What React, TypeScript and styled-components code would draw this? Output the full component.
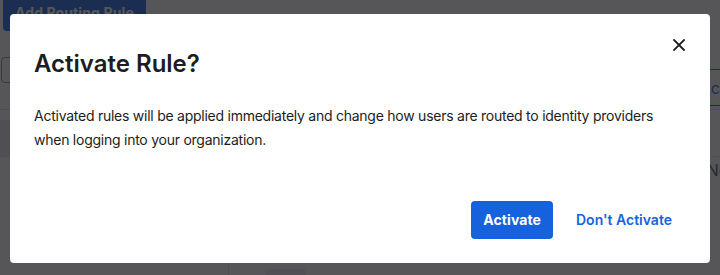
import styled, { createGlobalStyle } from 'styled-components';

const colors = {
  text: '#1d1d21',
  blue: '#1662dd',
  border: '#8c8c96',
  divider: '#e1e1e5',
  overlay: 'rgba(29, 29, 33, 0.75)',
};

const GlobalStyle = createGlobalStyle`
  html, body {
    margin: 0;
    padding: 0;
    background: #ffffff;
    font-family: Inter, "Noto Sans", "Liberation Sans", sans-serif;
    color: ${colors.text};
  }
`;

function App() {
  return (
    <>
      <GlobalStyle />
      <StyledPage>
        <StyledToolbar>
          <StyledPrimaryButton as="div">Add Routing Rule</StyledPrimaryButton>
        </StyledToolbar>
        <StyledFilterRow>
          <StyledSearch />
          <StyledTabs>
            <StyledTab>Inactive</StyledTab>
            <StyledTab isSelected>Active</StyledTab>
          </StyledTabs>
        </StyledFilterRow>
        <StyledTable>
          <StyledTableHead />
          <StyledTableRow>
            <StyledCell />
          </StyledTableRow>
          <StyledEmptyRow>No rules</StyledEmptyRow>
        </StyledTable>
        <StyledBottom>
          <StyledSideColumn />
          <StyledChip />
        </StyledBottom>
      </StyledPage>

      <StyledOverlay>
        <StyledDialog role="dialog" aria-labelledby="dialog-title">
          <StyledHeader>
            <StyledTitle id="dialog-title">Activate Rule?</StyledTitle>
            <StyledCloseButton aria-label="Close">
              <svg width="12" height="12" viewBox="0 0 12 12" fill="none">
                <path d="M1 1L11 11M11 1L1 11" stroke={colors.text} strokeWidth="1.8" strokeLinecap="square" />
              </svg>
            </StyledCloseButton>
          </StyledHeader>
          <StyledBody>
            Activated rules will be applied immediately and change how users are routed to identity providers
            when logging into your organization.
          </StyledBody>
          <StyledFooter>
            <StyledPrimaryButton>Activate</StyledPrimaryButton>
            <StyledTextButton>Don't Activate</StyledTextButton>
          </StyledFooter>
        </StyledDialog>
      </StyledOverlay>
    </>
  );
}

const StyledPage = styled.div`
  display: flex;
  flex-direction: column;
  height: 275px;
  overflow: hidden;
`;

const StyledToolbar = styled.div`
  display: flex;
  padding-left: 3px;
  margin-top: -7px;
`;

const StyledPrimaryButton = styled.button`
  display: flex;
  align-items: center;
  justify-content: center;
  height: 38px;
  padding: 0 12px;
  border: none;
  border-radius: 4px;
  background: ${colors.blue};
  color: #ffffff;
  font-family: inherit;
  font-size: 14px;
  font-weight: 700;
  letter-spacing: 0.1px;
  cursor: pointer;
`;

const StyledFilterRow = styled.div`
  display: flex;
  justify-content: space-between;
  align-items: flex-start;
  margin-top: 26px;
`;

const StyledSearch = styled.div`
  width: 220px;
  height: 24px;
  margin-left: 1px;
  border: 1px solid ${colors.border};
  border-radius: 4px;
`;

const StyledTabs = styled.div`
  display: flex;
  margin-top: 12px;
`;

const StyledTab = styled.div<{ isSelected?: boolean }>`
  display: flex;
  align-items: center;
  height: 35px;
  padding: ${({ isSelected }) => (isSelected ? '0 0 0 16px' : '0 16px')};
  border-top: 1px solid ${({ isSelected }) => (isSelected ? colors.blue : 'transparent')};
  border-bottom: 1px solid ${({ isSelected }) => (isSelected ? colors.blue : 'transparent')};
  color: ${({ isSelected }) => (isSelected ? colors.blue : colors.text)};
  font-size: 16px;
  margin-right: ${({ isSelected }) => (isSelected ? '-27px' : '0')};
`;

const StyledTable = styled.div`
  display: flex;
  flex-direction: column;
  margin-top: 3px;
  border-top: 1px solid ${colors.divider};
`;

const StyledTableHead = styled.div`
  height: 10px;
`;

const StyledTableRow = styled.div`
  display: flex;
  align-items: center;
  height: 36px;
  border-bottom: 1px solid ${colors.divider};
`;

const StyledCell = styled.div`
  width: 30px;
  height: 36px;
  border-radius: 0 6px 6px 0;
  background: #e8e8ea;
`;

const StyledEmptyRow = styled.div`
  display: flex;
  justify-content: flex-end;
  margin: 0 -50px 0 0;
  padding-top: 3px;
  color: #3f5173;
  font-size: 16px;
  line-height: 20px;
`;

const StyledBottom = styled.div`
  display: flex;
  flex: 1;
  margin-top: 79px;
`;

const StyledSideColumn = styled.div`
  width: 228px;
  border-right: 1px solid ${colors.divider};
`;

const StyledChip = styled.div`
  width: 40px;
  height: 12px;
  margin: 10px 0 0 37px;
  border-radius: 4px;
  background: #ececee;
`;

const StyledOverlay = styled.div`
  position: fixed;
  inset: 0;
  display: flex;
  align-items: center;
  justify-content: center;
  background: ${colors.overlay};
`;

const StyledDialog = styled.div`
  display: flex;
  flex-direction: column;
  box-sizing: border-box;
  width: 700px;
  height: 249px;
  margin-top: 1px;
  padding: 35px 24px 24px;
  border-radius: 4px;
  background: #ffffff;
`;

const StyledHeader = styled.div`
  display: flex;
  justify-content: space-between;
  align-items: flex-start;
`;

const StyledTitle = styled.h1`
  margin: 0;
  font-size: 24px;
  font-weight: 600;
  line-height: 30px;
  color: ${colors.text};
`;

const StyledCloseButton = styled.button`
  display: flex;
  align-items: center;
  justify-content: center;
  width: 24px;
  height: 24px;
  margin: -16px -5px 0 0;
  padding: 0;
  border: none;
  background: none;
  cursor: pointer;
`;

const StyledBody = styled.p`
  margin: 25px 0 0;
  font-size: 14px;
  line-height: 24px;
  letter-spacing: -0.25px;
  color: ${colors.text};
`;

const StyledFooter = styled.div`
  display: flex;
  justify-content: flex-end;
  align-items: center;
  gap: 9px;
  margin-top: auto;
`;

const StyledTextButton = styled.button`
  height: 38px;
  padding: 0 14px;
  border: none;
  background: none;
  color: ${colors.blue};
  font-family: inherit;
  font-size: 14px;
  font-weight: 600;
  cursor: pointer;
`;

export default App;
